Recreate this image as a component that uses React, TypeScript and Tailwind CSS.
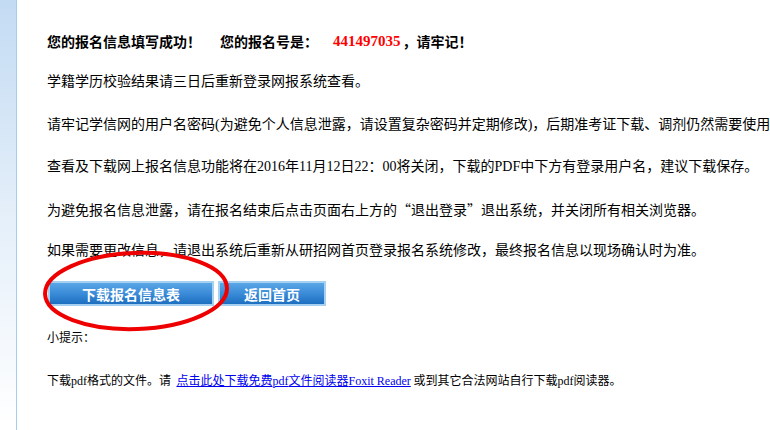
import React from 'react'

const cjk = { fontFamily: '"Noto Sans CJK SC", "Liberation Sans", sans-serif' }

function Num({ children }: { children: React.ReactNode }): JSX.Element {
  return <span className="font-['Liberation_Serif',serif]">{children}</span>
}

function BlueButton({ label, width }: { label: string; width: string }): JSX.Element {
  return (
    <div className={`${width} h-[25px] border-2 border-[#a6d0ef] bg-[#a6d0ef]`}>
      <div className="h-full bg-gradient-to-b from-[#5aa6e6] via-[#3a8bd8] to-[#1c6fc0] flex items-center justify-center text-white font-bold text-[14px] leading-none">
        {label}
      </div>
    </div>
  )
}

function App(): JSX.Element {
  const line = 'h-[20px] leading-[20px] overflow-visible'

  return (
    <main className="w-[770px] h-[430px] bg-white flex overflow-hidden text-black" style={cjk}>
      <aside className="w-[17px] shrink-0 bg-gradient-to-b from-[#c3dbf3] via-[#e4eff9] to-white border-r border-[#a8ccee]" />

      <section className="relative flex-1 pl-[30px] flex flex-col text-[14px] whitespace-nowrap">
        <p className={`${line} mt-[31px] font-bold flex items-center`}>
          <span>您的报名信息填写成功！</span>
          <span className="ml-[19px]">您的报名号是：</span>
          <span className="ml-[15px] text-[#ff0000] font-['Liberation_Serif',serif] text-[15px]">441497035</span>
          <span className="ml-[2px]">，请牢记！</span>
        </p>
        <p className={`${line} mt-[19px]`}>学籍学历校验结果请三日后重新登录网报系统查看。</p>
        <p className={`${line} mt-[23px]`}>
          请牢记学信网的用户名密码<Num>(</Num>为避免个人信息泄露，请设置复杂密码并定期修改<Num>)</Num>，后期准考证下载、调剂仍然需要使用
        </p>
        <p className={`${line} mt-[22px]`}>
          查看及下载网上报名信息功能将在<Num>2016</Num>年<Num>11</Num>月<Num>12</Num>日<Num>22</Num>：<Num>00</Num>将关闭，下载的<Num>PDF</Num>中下方有登录用户名，建议下载保存。
        </p>
        <p className={`${line} mt-[24px]`}>为避免报名信息泄露，请在报名结束后点击页面右上方的“退出登录”退出系统，并关闭所有相关浏览器。</p>
        <p className={`${line} mt-[20px]`}>如果需要更改信息，请退出系统后重新从研招网首页登录报名系统修改，最终报名信息以现场确认时为准。</p>

        <div className="mt-[22px] flex gap-[4px] ml-[1px]">
          <BlueButton label="下载报名信息表" width="w-[166px]" />
          <BlueButton label="返回首页" width="w-[108px]" />
        </div>

        <p className={`${line} mt-[21px] text-[12px]`}>小提示：</p>
        <p className={`${line} mt-[23px] text-[12px]`}>
          下载<Num>pdf</Num>格式的文件。请&nbsp;{' '}
          <a href="#" className="text-[#0000ee] underline">
            点击此处下载免费<Num>pdf</Num>文件阅读器<Num>Foxit Reader</Num>
          </a>{' '}
          或到其它合法网站自行下载<Num>pdf</Num>阅读器。
        </p>

        <svg
          className="absolute left-[24px] top-[248px] pointer-events-none"
          width="200"
          height="86"
          viewBox="0 0 200 86"
        >
          <ellipse
            cx="95"
            cy="43"
            rx="91"
            ry="38"
            fill="none"
            stroke="#ee0000"
            strokeWidth="4"
            transform="rotate(-2 95 43)"
          />
        </svg>
      </section>
    </main>
  )
}

export default App
